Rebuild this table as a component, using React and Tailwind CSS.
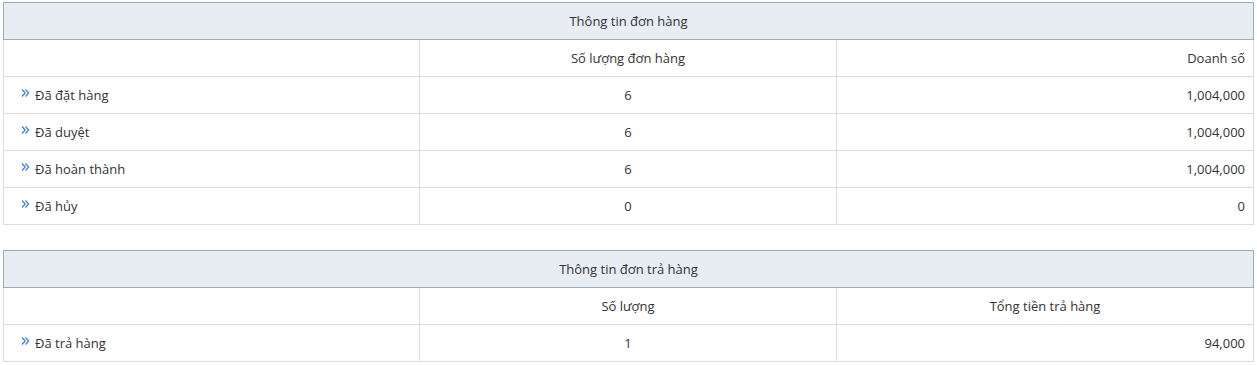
import React from "react";

const Chev = () => (
  <svg width="9" height="10" viewBox="0 0 9 10" className="mr-[5px] -mt-[5px] shrink-0" fill="none" stroke="#3a80d6" strokeWidth="1.2">
    <path d="M1 1.5 L4.2 5 L1 8.5" />
    <path d="M4.5 1.5 L7.7 5 L4.5 8.5" />
  </svg>
);

function Table({ title, cols, rows }) {
  return (
    <div className="w-full">
      <div className="h-[38px] border border-[#9eabba] bg-[#e8edf3] flex items-center justify-center pt-[1px] text-[13px] text-[#333]">
        {title}
      </div>
      <div className="border-x border-[#dcdcdc]">
        <div className="grid grid-cols-[416px_417px_1fr] h-[37px] border-b border-[#dcdcdc]">
          <div className="border-r border-[#dcdcdc]" />
          <div className="border-r border-[#dcdcdc] flex items-center justify-center pt-[1px]">{cols[0]}</div>
          <div className={"flex items-center px-[8px] pt-[1px] " + (cols[2] === "right" ? "justify-end" : "justify-center")}>{cols[1]}</div>
        </div>
        {rows.map((r, i) => (
          <div key={i} className="grid grid-cols-[416px_417px_1fr] h-[37px] border-b border-[#dcdcdc]">
            <div className="border-r border-[#dcdcdc] flex items-center pl-[17px] pt-[1px]">
              <Chev />
              <span>{r[0]}</span>
            </div>
            <div className="border-r border-[#dcdcdc] flex items-center justify-center pt-[1px]">{r[1]}</div>
            <div className="flex items-center justify-end pr-[8px] pt-[1px]">{r[2]}</div>
          </div>
        ))}
      </div>
    </div>
  );
}

export default function App() {
  return (
    <div className="bg-white w-[1257px] h-[365px] pt-[2px] px-[3px] text-[13px] text-[#333]" style={{ fontFamily: '"Open Sans", "Noto Sans", sans-serif' }}>
      <Table
        title="Thông tin đơn hàng"
        cols={["Số lượng đơn hàng", "Doanh số", "right"]}
        rows={[
          ["Đã đặt hàng", "6", "1,004,000"],
          ["Đã duyệt", "6", "1,004,000"],
          ["Đã hoàn thành", "6", "1,004,000"],
          ["Đã hủy", "0", "0"],
        ]}
      />
      <div className="h-[25px]" />
      <Table
        title="Thông tin đơn trả hàng"
        cols={["Số lượng", "Tổng tiền trả hàng", "center"]}
        rows={[["Đã trả hàng", "1", "94,000"]]}
      />
    </div>
  );
}
